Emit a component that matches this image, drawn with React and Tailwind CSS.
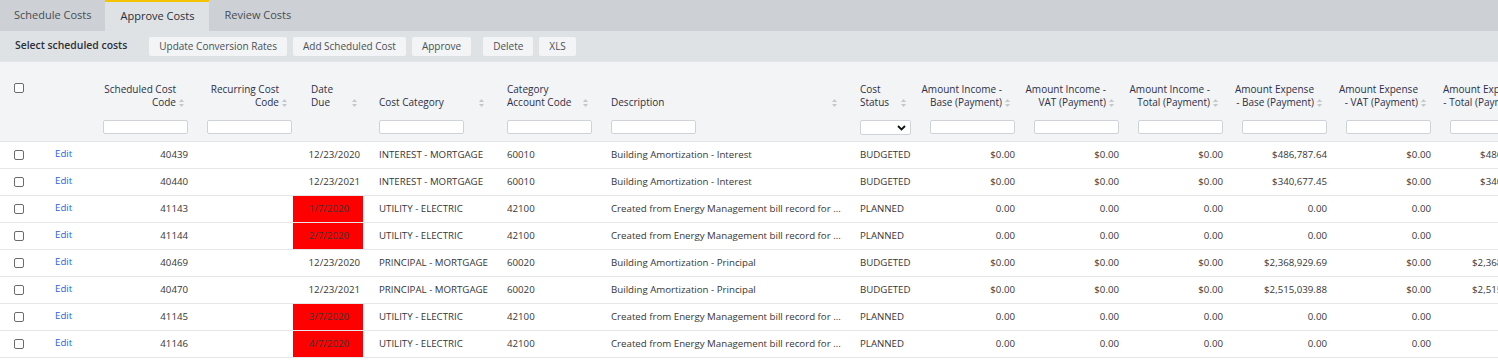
import React from 'react'

const cols = 'grid grid-cols-[45px_50px_104px_94px_70px_136px_104px_249px_70px_104px_104px_104px_104px_104px_104px]'

const SortIcon = () => (
  <svg width="5" height="8" viewBox="0 0 5 8" className="shrink-0 mb-[2px]">
    <path d="M2.5 0 L5 3 L0 3 Z" fill="#c4c8cc" />
    <path d="M0 5 L5 5 L2.5 8 Z" fill="#c4c8cc" />
  </svg>
)

const Box = () => <span className="block w-[10px] h-[10px] border border-[#6b6b6b] rounded-[2px] bg-white" />

const Filter = () => <div className="w-[85px] h-[14px] bg-white border border-[#cfd3d7] rounded-[2px]" />

const headers = [
  { key: 'chk' },
  { key: 'edit' },
  { label: ['Scheduled Cost', 'Code'], right: true, pad: 'pl-[8px] pr-[15px]', filter: true },
  { label: ['Recurring Cost', 'Code'], right: true, pad: 'pl-[8px] pr-[6px]', filter: true },
  { label: ['Date', 'Due'], pad: 'pl-[18px] pr-[6px]' },
  { label: ['Cost Category'], pad: 'pl-[16px] pr-[15px]', filter: true },
  { label: ['Category', 'Account Code'], pad: 'pl-[8px] pr-[15px]', filter: true },
  { label: ['Description'], pad: 'pl-[8px] pr-[15px]', filter: true },
  { label: ['Cost', 'Status'], pad: 'pl-[8px] pr-[16px]', select: true },
  { label: ['Amount Income -', 'Base (Payment)'], right: true, pad: 'pl-[8px] pr-[16px]', filter: true },
  { label: ['Amount Income -', 'VAT (Payment)'], right: true, pad: 'pl-[8px] pr-[16px]', filter: true },
  { label: ['Amount Income -', 'Total (Payment)'], right: true, pad: 'pl-[8px] pr-[16px]', filter: true },
  { label: ['Amount Expense', '- Base (Payment)'], right: true, pad: 'pl-[8px] pr-[16px]', filter: true },
  { label: ['Amount Expense', '- VAT (Payment)'], right: true, pad: 'pl-[8px] pr-[16px]', filter: true },
  { label: ['Amount Expense', '- Total (Payment)'], right: true, pad: 'pl-[8px] pr-[16px]', filter: true },
]

const created = 'Created from Energy Management bill record for ...'

const rows = [
  ['40439', '12/23/2020', false, 'INTEREST - MORTGAGE', '60010', 'Building Amortization - Interest', 'BUDGETED', ['$0.00', '$0.00', '$0.00', '$486,787.64', '$0.00', '$486,787.64']],
  ['40440', '12/23/2021', false, 'INTEREST - MORTGAGE', '60010', 'Building Amortization - Interest', 'BUDGETED', ['$0.00', '$0.00', '$0.00', '$340,677.45', '$0.00', '$340,677.45']],
  ['41143', '1/7/2020', true, 'UTILITY - ELECTRIC', '42100', created, 'PLANNED', ['0.00', '0.00', '0.00', '0.00', '0.00', '0.00']],
  ['41144', '2/7/2020', true, 'UTILITY - ELECTRIC', '42100', created, 'PLANNED', ['0.00', '0.00', '0.00', '0.00', '0.00', '0.00']],
  ['40469', '12/23/2020', false, 'PRINCIPAL - MORTGAGE', '60020', 'Building Amortization - Principal', 'BUDGETED', ['$0.00', '$0.00', '$0.00', '$2,368,929.69', '$0.00', '$2,368,929.69']],
  ['40470', '12/23/2021', false, 'PRINCIPAL - MORTGAGE', '60020', 'Building Amortization - Principal', 'BUDGETED', ['$0.00', '$0.00', '$0.00', '$2,515,039.88', '$0.00', '$2,515,039.88']],
  ['41145', '3/7/2020', true, 'UTILITY - ELECTRIC', '42100', created, 'PLANNED', ['0.00', '0.00', '0.00', '0.00', '0.00', '0.00']],
  ['41146', '4/7/2020', true, 'UTILITY - ELECTRIC', '42100', created, 'PLANNED', ['0.00', '0.00', '0.00', '0.00', '0.00', '0.00']],
]

const HeaderCell = ({ h }) => {
  if (h.key === 'chk')
    return (
      <div className="pl-[14px] pt-[21px]">
        <Box />
      </div>
    )
  if (h.key === 'edit') return <div />
  return (
    <div className={`flex flex-col ${h.pad}`}>
      <div className={`h-[50px] flex items-end pb-[3px] ${h.right ? 'justify-end gap-[3px]' : 'justify-between'}`}>
        <div className={`leading-[13px] whitespace-nowrap ${h.right ? 'text-right' : ''}`}>
          {h.label.map((l) => (
            <div key={l}>{l}</div>
          ))}
        </div>
        <SortIcon />
      </div>
      <div className="h-[29px] pt-[8px]">
        {h.filter && <Filter />}
        {h.select && (
          <div className="w-[51px] h-[15px] bg-white border border-[#cfd3d7] rounded-[2px] flex items-center justify-end pr-[4px]">
            <svg width="9" height="6" viewBox="0 0 9 6">
              <path d="M1 1 L4.5 4.5 L8 1" fill="none" stroke="#111" strokeWidth="1.8" />
            </svg>
          </div>
        )}
      </div>
    </div>
  )
}

const Row = ({ r }) => {
  const [code, date, late, cat, acct, desc, status, nums] = r
  return (
    <div className={`${cols} h-[27px] border-b border-[#e4e6e8] items-stretch`}>
      <div className="pl-[14px] flex items-center">
        <Box />
      </div>
      <div className="pl-[10px] flex items-center pb-[2px] text-[#2860e1]">Edit</div>
      <div className="pr-[11px] flex items-center justify-end">{code}</div>
      <div />
      <div className={`flex items-center justify-end ${late ? 'bg-[#ff0000] pr-[14px]' : 'pr-[3px]'}`}>{date}</div>
      <div className="pl-[16px] flex items-center whitespace-nowrap">{cat}</div>
      <div className="pl-[8px] flex items-center">{acct}</div>
      <div className="pl-[8px] flex items-center whitespace-nowrap">{desc}</div>
      <div className="pl-[8px] flex items-center">{status}</div>
      {nums.map((n, i) => (
        <div key={i} className="pr-[11px] flex items-center justify-end whitespace-nowrap">
          {n}
        </div>
      ))}
    </div>
  )
}

export default function App() {
  return (
    <div className="w-[1498px] h-[362px] overflow-hidden bg-white font-['Open_Sans',sans-serif]">
      <div className="h-[31px] bg-[#cdd1d5] flex text-[11px] text-[#474c54]">
        <div className="pl-[14px] pr-[14px] flex items-center">Schedule Costs</div>
        <div className="px-[15px] flex items-center bg-[#dee2e5] border-t-2 border-[#f5c400] text-[#2a2e35]">Approve Costs</div>
        <div className="px-[15px] flex items-center">Review Costs</div>
      </div>
      <div className="h-[30px] bg-[#dee2e5] flex items-center pl-[15px]">
        <span className="text-[10.4px] font-semibold text-[#2b2f38] mr-[22px]">Select scheduled costs</span>
        <div className="flex gap-[6px] text-[10px] text-[#4b5058]">
          <button className="h-[19px] px-[10px] bg-[#f2f4f5] rounded-[2px]">Update Conversion Rates</button>
          <button className="h-[19px] px-[10px] bg-[#f2f4f5] rounded-[2px]">Add Scheduled Cost</button>
          <button className="h-[19px] px-[10px] bg-[#f2f4f5] rounded-[2px]">Approve</button>
          <button className="h-[19px] px-[10px] bg-[#f2f4f5] rounded-[2px] ml-[6px]">Delete</button>
          <button className="h-[19px] px-[10px] bg-[#f2f4f5] rounded-[2px]">XLS</button>
        </div>
      </div>
      <div className="w-[1546px] text-[10px]">
        <div className={`${cols} bg-[#f3f4f6] border-t border-b border-[#e2e4e7] text-[#2d3046]`}>
          {headers.map((h, i) => (
            <HeaderCell key={i} h={h} />
          ))}
        </div>
        <div className="text-[#363636] text-[9.7px]">
          {rows.map((r, i) => (
            <Row key={i} r={r} />
          ))}
        </div>
      </div>
    </div>
  )
}
